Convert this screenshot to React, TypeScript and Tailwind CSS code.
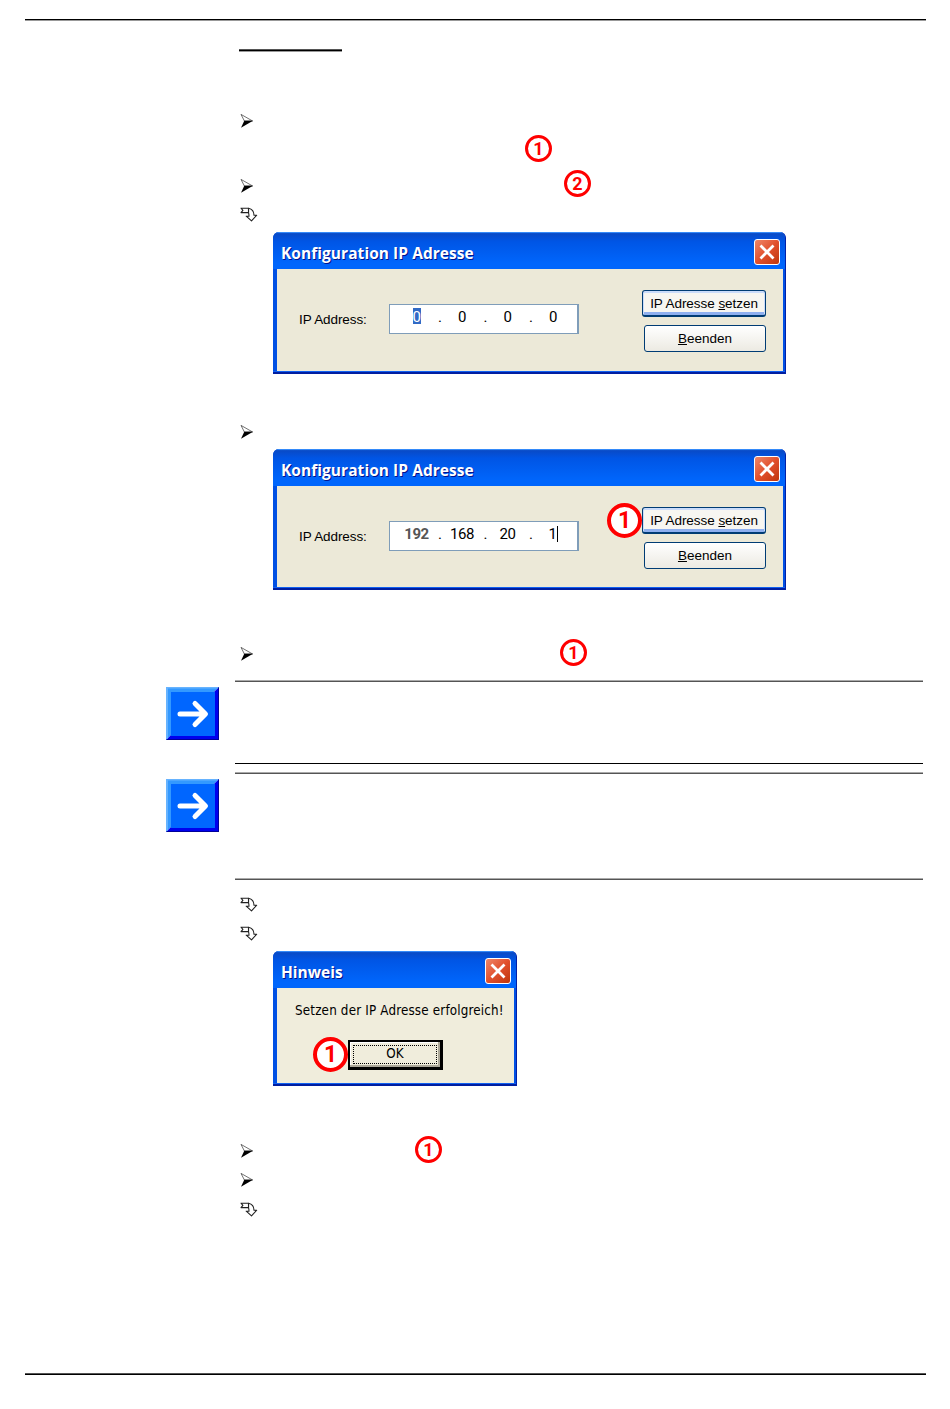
import { ReactNode } from "react";
import clsx from "clsx";

const Chevron = ({ className }: { className?: string }) => (
  <svg viewBox="0 0 14 14" className={clsx("h-3.5 w-3.5 shrink-0", className)}>
    <path d="M1 .4 12.6 7 4.4 7Z" fill="#fff" stroke="#333" strokeWidth=".7" />
    <path d="M4.3 6.8H13L1 13.8Z" fill="#000" />
  </svg>
);

const ResultArrow = ({ className }: { className?: string }) => (
  <svg
    viewBox="0 0 18 15"
    className={clsx("block h-[15px] w-[18px]", className)}
    fill="#fff"
    stroke="#222"
    strokeWidth="1.1"
    strokeLinejoin="round"
  >
    <path d="M8.5 1.2C12 2 14 4.5 14 8.2H16.7L11.5 13.9 6.2 9.2H9Q9 7 8.5 5.6Z" />
    <path d="M1 1.2H8.5V5.6H1L2.9 3.4Z" />
  </svg>
);

const Marker = ({ n, className }: { n: number; className?: string }) => (
  <span
    className={clsx(
      "flex shrink-0 items-center justify-center rounded-full border-[#f00] bg-white font-['Roboto',sans-serif] font-bold text-[#f00]",
      className,
    )}
  >
    {n}
  </span>
);

const small = "h-[27px] w-[27px] border-[3px] text-[18px] leading-none";
const large = "h-[35px] w-[35px] border-[4px] text-[23px] leading-none";

const CloseButton = ({ className }: { className?: string }) => (
  <button
    className={clsx(
      "flex h-[26px] w-[26px] items-center justify-center rounded-[3px] border border-white bg-linear-to-br from-[#ee8668] via-[#e1502c] to-[#c03608]",
      className,
    )}
  >
    <svg viewBox="0 0 16 16" className="h-4 w-4" stroke="#fff" strokeWidth="2.8">
      <path d="M1.5 1.5l13 13M14.5 1.5l-13 13" />
    </svg>
  </button>
);

const Dialog = ({
  title,
  className,
  titleClass,
  bodyClass,
  children,
}: {
  title: string;
  className: string;
  titleClass: string;
  bodyClass: string;
  children: ReactNode;
}) => (
  <div
    className={clsx(
      "ml-[273px] flex flex-col overflow-hidden rounded-t-[6px] border-r border-r-[#0020a8] bg-[#0050e4]",
      className,
    )}
  >
    <div className="flex h-[37px] shrink-0 items-start justify-between bg-linear-to-b from-[#0a48c0] from-0% via-[#0055e5] via-25% to-[#0066fc] to-85% pt-[7px] pr-[5px] pl-2 shadow-[inset_0_2px_1px_-1px_#3a92ff]">
      <span
        className={clsx(
          "font-['Open_Sans',sans-serif] font-bold whitespace-nowrap text-white [text-shadow:1px_1px_0_#00138c]",
          titleClass,
        )}
      >
        {title}
      </span>
      <CloseButton />
    </div>
    <div className={clsx("mr-0.5 ml-1 flex-1", bodyClass)}>{children}</div>
    <div className="h-[3px] shrink-0 border-b-2 border-[#001ea0] bg-[#1060f0]" />
  </div>
);

const IpDialog = ({
  octets,
  mode,
  className,
}: {
  octets: string[];
  mode: "empty" | "filled";
  className: string;
}) => (
  <Dialog
    title="Konfiguration IP Adresse"
    className={clsx("w-[513px]", className)}
    titleClass="text-[15.5px] leading-[28px] tracking-[0.05px]"
    bodyClass="bg-[#ece9d8]"
  >
    <div className="flex pr-[17px] pl-[22px]">
      <label className="mt-[41px] w-[90px] text-[13.5px] leading-5 tracking-[-0.1px] whitespace-nowrap text-black">
        IP Address:
      </label>
      <div className="mt-[35px] flex h-[30px] w-[190px] border border-r-2 border-[#7f9db9] bg-white pl-[10px] font-['Roboto',sans-serif] text-[15px] leading-[24px] tracking-[-0.4px]">
        {octets.map((octet, i) => (
          <div key={i} className="flex w-[45.5px] shrink-0">
            <span className="flex w-[33px] shrink-0 justify-center">
              {mode === "empty" && i === 0 ? (
                <span className="mt-[3px] h-4 w-2 bg-[#316ac5] leading-[18px] text-white">
                  {octet}
                </span>
              ) : (
                <span
                  className={clsx(
                    mode === "filled" && i === 0 && "font-bold text-[#555]",
                    mode === "filled" &&
                      i === 3 &&
                      "mt-1 h-4 border-r border-black leading-4",
                  )}
                >
                  {octet}
                </span>
              )}
            </span>
            {i < 3 && <span className="ml-[5px]">.</span>}
          </div>
        ))}
      </div>
      <div className="mt-[21px] ml-auto flex flex-col items-end gap-2 text-[13.5px]">
        <div className="flex h-[27px] items-center">
          {mode === "filled" && <Marker n={1} className={large} />}
          <button className="h-[27px] w-[124px] rounded-[3px] border border-b-2 border-[#003c74] bg-[#f7f6f1] leading-[23px] tracking-[-0.05px] whitespace-nowrap shadow-[inset_0_1px_0_1px_#cbdcfa,inset_0_-2px_0_1px_#8fb0f0]">
            IP Adresse <u>s</u>etzen
          </button>
        </div>
        <button className="h-[27px] w-[122px] rounded-[3px] border border-[#003c74] bg-linear-to-b from-white to-[#eceae2] leading-[25px]">
          <u>B</u>eenden
        </button>
      </div>
    </div>
  </Dialog>
);

const Note = ({
  className,
  ruleClass,
}: {
  className: string;
  ruleClass: string;
}) => (
  <section className={clsx("mr-[27px] flex pl-[166px]", className)}>
    <svg viewBox="0 0 53 53" className="mt-[7px] h-[53px] w-[53px]">
      <path d="M0 0H53L0 53Z" fill="#3399ff" />
      <path d="M53 0V53H0Z" fill="#0000ee" />
      <path d="M0 0H53L51 1.5H2V51L0 53Z" fill="#66b3ff" />
      <path d="M53 0V53H0l1-1H52V1Z" fill="#000099" />
      <path d="M5 5H49V49H5Z" fill="#0066ff" />
      <path
        d="M14 27H39M29 16.5 39.5 27 29 37.5"
        fill="none"
        stroke="#fff"
        strokeWidth="5"
        strokeLinecap="round"
        strokeLinejoin="round"
      />
    </svg>
    <div className={clsx("ml-4 flex flex-1 flex-col justify-between", ruleClass)}>
      <div className="h-0.5 border-b border-[#555] bg-[#aaa]" />
    </div>
  </section>
);

const App = () => {
  return (
    <main className="h-[1409px] w-[950px] overflow-hidden bg-white font-['Liberation_Sans',Arial,sans-serif] text-black">
      <div className="mt-[19px] mr-6 ml-[25px] h-0.5 border-t border-b border-t-black border-b-[#999]" />
      <div className="mt-7 ml-[239px] h-[3px] w-[103px] border-t border-b border-t-[#555] border-b-[#999] bg-black" />

      <Chevron className="mt-[62px] ml-[240px]" />
      <div className="mt-[7px] pl-[525px]">
        <Marker n={1} className={small} />
      </div>
      <div className="mt-2 flex h-[27px] pl-[240px]">
        <Chevron className="mt-[9px]" />
        <Marker n={2} className={clsx("ml-[310px]", small)} />
      </div>
      <ResultArrow className="mt-[10px] ml-[240px]" />
      <IpDialog
        mode="empty"
        octets={["0", "0", "0", "0"]}
        className="mt-[10px] h-[142px]"
      />

      <Chevron className="mt-[51px] ml-[240px]" />
      <IpDialog
        mode="filled"
        octets={["192", "168", "20", "1"]}
        className="mt-[10px] h-[141px]"
      />

      <div className="mt-[49px] flex h-[27px] pl-[240px]">
        <Chevron className="mt-2" />
        <Marker n={1} className={clsx("ml-[306px]", small)} />
      </div>

      <Note className="mt-[14px] h-[84px]" ruleClass="border-b border-black" />
      <Note
        className="mt-2 h-[108px]"
        ruleClass="border-b border-[#555] shadow-[inset_0_-1px_0_#aaa]"
      />

      <ResultArrow className="mt-[17px] ml-[240px]" />
      <ResultArrow className="mt-[14px] ml-[240px]" />
      <Dialog
        title="Hinweis"
        className="mt-[10px] h-[135px] w-[244px]"
        titleClass="text-[15.5px] leading-[28px]"
        bodyClass="bg-[#f0eddc]"
      >
        <p className="pt-[13px] pl-[18px] font-['DejaVu_Sans_Condensed','DejaVu_Sans',sans-serif] text-[13.3px] leading-5 tracking-[0.17px] whitespace-nowrap">
          Setzen der IP Adresse erfolgreich!
        </p>
        <div className="mt-4 flex items-center pl-[36px]">
          <Marker n={1} className={large} />
          <button className="h-[30px] w-[95px] border-2 border-r-[3px] border-b-[3px] border-black bg-[#f0eddc] p-[3px] font-['DejaVu_Sans_Condensed','DejaVu_Sans',sans-serif] text-[13.3px] shadow-[inset_-2px_-2px_0_#aca899,inset_1px_1px_0_#fff]">
            <span className="flex h-full items-center justify-center border border-dotted border-black">
              OK
            </span>
          </button>
        </div>
      </Dialog>

      <div className="mt-[50px] flex h-[27px] pl-[240px]">
        <Chevron className="mt-2" />
        <Marker n={1} className={clsx("ml-[161px]", small)} />
      </div>
      <Chevron className="mt-[10px] ml-[240px]" />
      <ResultArrow className="mt-[15px] ml-[240px]" />

      <div className="mt-[156px] mr-6 ml-[25px] h-0.5 border-t border-b border-t-[#555] border-b-black" />
    </main>
  );
};

export default App;
